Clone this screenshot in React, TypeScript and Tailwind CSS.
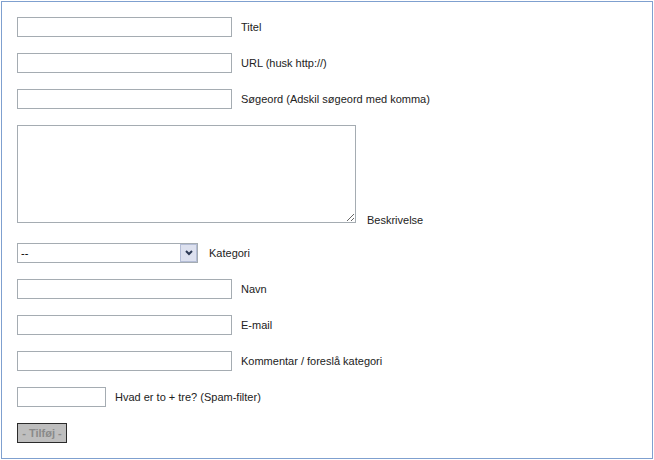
import React from "react";

const inputCls =
  "w-[215px] h-[20px] border border-[#a5acb2] bg-white px-[2px] text-[11px] outline-none";

function Row({ label, children, gap = "gap-[9px]" }: { label: string; children: React.ReactNode; gap?: string }) {
  return (
    <div className={`flex items-center ${gap}`}>
      {children}
      <span className="leading-[13px] text-[#222] mt-[1px]">{label}</span>
    </div>
  );
}

export default function App() {
  return (
    <div className="pt-px pl-px bg-white">
      <div className="w-[652px] h-[458px] border border-[#7fa0cf] bg-white px-[15px] pt-[15px] flex flex-col font-['Liberation_Sans',Arial,sans-serif] text-[11px]">
        <Row label="Titel">
          <input className={inputCls} />
        </Row>
        <div className="mt-[16px]">
          <Row label="URL (husk http://)">
            <input className={inputCls} />
          </Row>
        </div>
        <div className="mt-[16px]">
          <Row label="Søgeord (Adskil søgeord med komma)">
            <input className={inputCls} />
          </Row>
        </div>
        <div className="mt-[16px] flex items-end gap-[11px]">
          <textarea className="w-[339px] h-[98px] border border-[#a5acb2] bg-white outline-none block" />
          <span className="leading-[11px] mb-[-3px] text-[#222]">Beskrivelse</span>
        </div>
        <div className="mt-[20px]">
          <Row label="Kategori" gap="gap-[11px]">
            <div className="relative w-[181px] h-[20px]">
              <select className="appearance-none w-full h-full border border-[#a5acb2] bg-white pl-[3px] text-[11px] text-black outline-none font-['Liberation_Sans',Arial,sans-serif]">
                <option>--</option>
              </select>
              <div className="absolute right-[1px] top-[1px] w-[17px] h-[18px] border border-[#b4bdd6] bg-[#dde1ef] flex items-center justify-center pointer-events-none">
                <svg width="8" height="6" viewBox="0 0 8 6">
                  <path d="M1 1 L4 4 L7 1" fill="none" stroke="#2d3a55" strokeWidth="2" />
                </svg>
              </div>
            </div>
          </Row>
        </div>
        <div className="mt-[16px]">
          <Row label="Navn">
            <input className={inputCls} />
          </Row>
        </div>
        <div className="mt-[16px]">
          <Row label="E-mail">
            <input className={inputCls} />
          </Row>
        </div>
        <div className="mt-[16px]">
          <Row label="Kommentar / foreslå kategori">
            <input className={inputCls} />
          </Row>
        </div>
        <div className="mt-[16px]">
          <Row label="Hvad er to + tre? (Spam-filter)">
            <input className="w-[89px] h-[20px] border border-[#a5acb2] bg-white px-[2px] text-[11px] outline-none" />
          </Row>
        </div>
        <div className="mt-[16px]">
          <button className="w-[50px] h-[20px] border border-[#2b2b2b] bg-[#bebebe] text-[#8a8a8a] font-bold text-[11px] leading-none flex items-center justify-center">
            - Tilføj -
          </button>
        </div>
      </div>
    </div>
  );
}
